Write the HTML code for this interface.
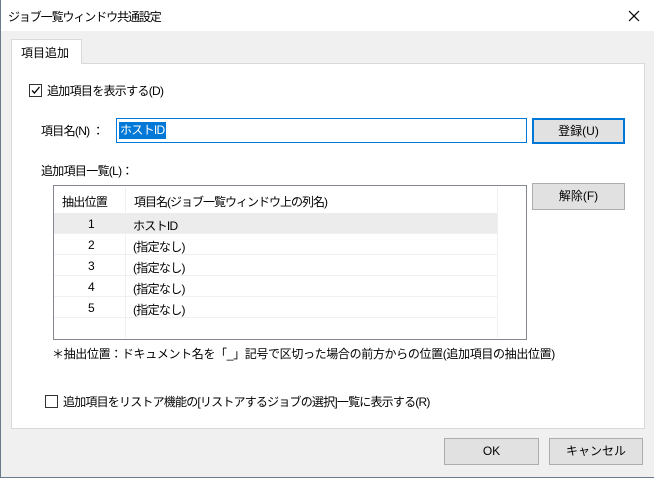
<!DOCTYPE html>
<html><head><meta charset="utf-8"><style>
*{margin:0;padding:0;box-sizing:border-box}
body{width:654px;height:478px;background:#f0f0f0;font-family:"Liberation Sans","Noto Sans CJK JP",sans-serif;font-size:12px;color:#000;position:relative;overflow:hidden;border-left:1px solid #6a7a8a;border-bottom:1px solid #6a7a8a}
.a{position:absolute;white-space:nowrap}
.t{letter-spacing:-0.7px}
.btn{position:absolute;background:#e1e1e1;border:1px solid #adadad;text-align:center}
.cb{position:absolute;width:13px;height:13px;border:1px solid #333;background:#fff}
.row{position:absolute;left:53px;width:443px;height:21px;border-bottom:1px solid #f0f0f0}
</style></head><body>
<div class="a" style="left:0;top:0;width:654px;height:31px;background:#fff"></div>
<div class="a t" style="left:7px;top:8px;font-size:12px;letter-spacing:-1.1px">ジョブ一覧ウィンドウ共通設定</div>
<svg class="a" style="left:627px;top:10px" width="12" height="12"><path d="M1 1L11 11M11 1L1 11" stroke="#000" stroke-width="1.2"/></svg>
<div class="a" style="left:10px;top:63px;width:634px;height:366px;background:#fff;border:1px solid #d9d9d9"></div>
<div class="a" style="left:10px;top:39px;width:71px;height:25px;background:#fff;border:1px solid #d9d9d9;border-bottom:none;padding:4px 0 0 9px">項目追加</div>
<div class="cb" style="left:28px;top:84px"></div>
<svg class="a" style="left:29px;top:85px" width="11" height="11"><path d="M2 5.5L4.5 8L9.5 2" stroke="#000" stroke-width="1.3" fill="none"/></svg>
<div class="a t" style="left:46px;top:82px">追加項目を表示する(D)</div>
<div class="a t" style="left:40px;top:122px">項目名(N) ：</div>
<div class="a" style="left:115px;top:118px;width:411px;height:25px;border:1px solid #0078d7;background:#fff"></div>
<div class="a t" style="left:118px;top:122px;background:#0078d7;color:#fff;padding:0 1px;height:17px;line-height:17px">ホストID</div>
<div class="btn" style="left:531px;top:118px;width:93px;height:26px;border:2px solid #0078d7;line-height:22px">登録(U)</div>
<div class="a t" style="left:40px;top:162px">追加項目一覧(L)：</div>
<div class="a" style="left:52px;top:185px;width:474px;height:155px;border:1px solid #828790;background:#fff"></div>
<div class="a" style="left:124px;top:187px;width:1px;height:151px;background:#f0f0f0"></div>
<div class="a" style="left:496px;top:187px;width:1px;height:151px;background:#f0f0f0"></div>
<div class="a t" style="left:61px;top:193px">抽出位置</div>
<div class="a t" style="left:133px;top:193px;letter-spacing:-1px">項目名(ジョブ一覧ウィンドウ上の列名)</div>
<div class="row" style="top:213px;background:#ececec"></div>
<div class="row" style="top:234px"></div><div class="row" style="top:255px"></div><div class="row" style="top:276px"></div><div class="row" style="top:297px"></div>
<div class="a" style="left:87px;top:217px">1</div><div class="a t" style="left:132px;top:217px">ホストID</div>
<div class="a" style="left:87px;top:238px">2</div><div class="a t" style="left:132px;top:238px">(指定なし)</div>
<div class="a" style="left:87px;top:259px">3</div><div class="a t" style="left:132px;top:259px">(指定なし)</div>
<div class="a" style="left:87px;top:280px">4</div><div class="a t" style="left:132px;top:280px">(指定なし)</div>
<div class="a" style="left:87px;top:301px">5</div><div class="a t" style="left:132px;top:301px">(指定なし)</div>
<div class="btn" style="left:531px;top:183px;width:93px;height:27px;line-height:25px">解除(F)</div>
<div class="a" style="left:51px;top:345px;letter-spacing:-0.35px">＊抽出位置：ドキュメント名を「_」記号で区切った場合の前方からの位置(追加項目の抽出位置)</div>
<div class="cb" style="left:44px;top:395px"></div>
<div class="a" style="left:62px;top:393px;letter-spacing:-0.8px">追加項目をリストア機能の[リストアするジョブの選択]一覧に表示する(R)</div>
<div class="btn" style="left:443px;top:438px;width:95px;height:27px;line-height:25px">OK</div>
<div class="btn" style="left:548px;top:438px;width:94px;height:27px;line-height:25px">キャンセル</div>
</body></html>
